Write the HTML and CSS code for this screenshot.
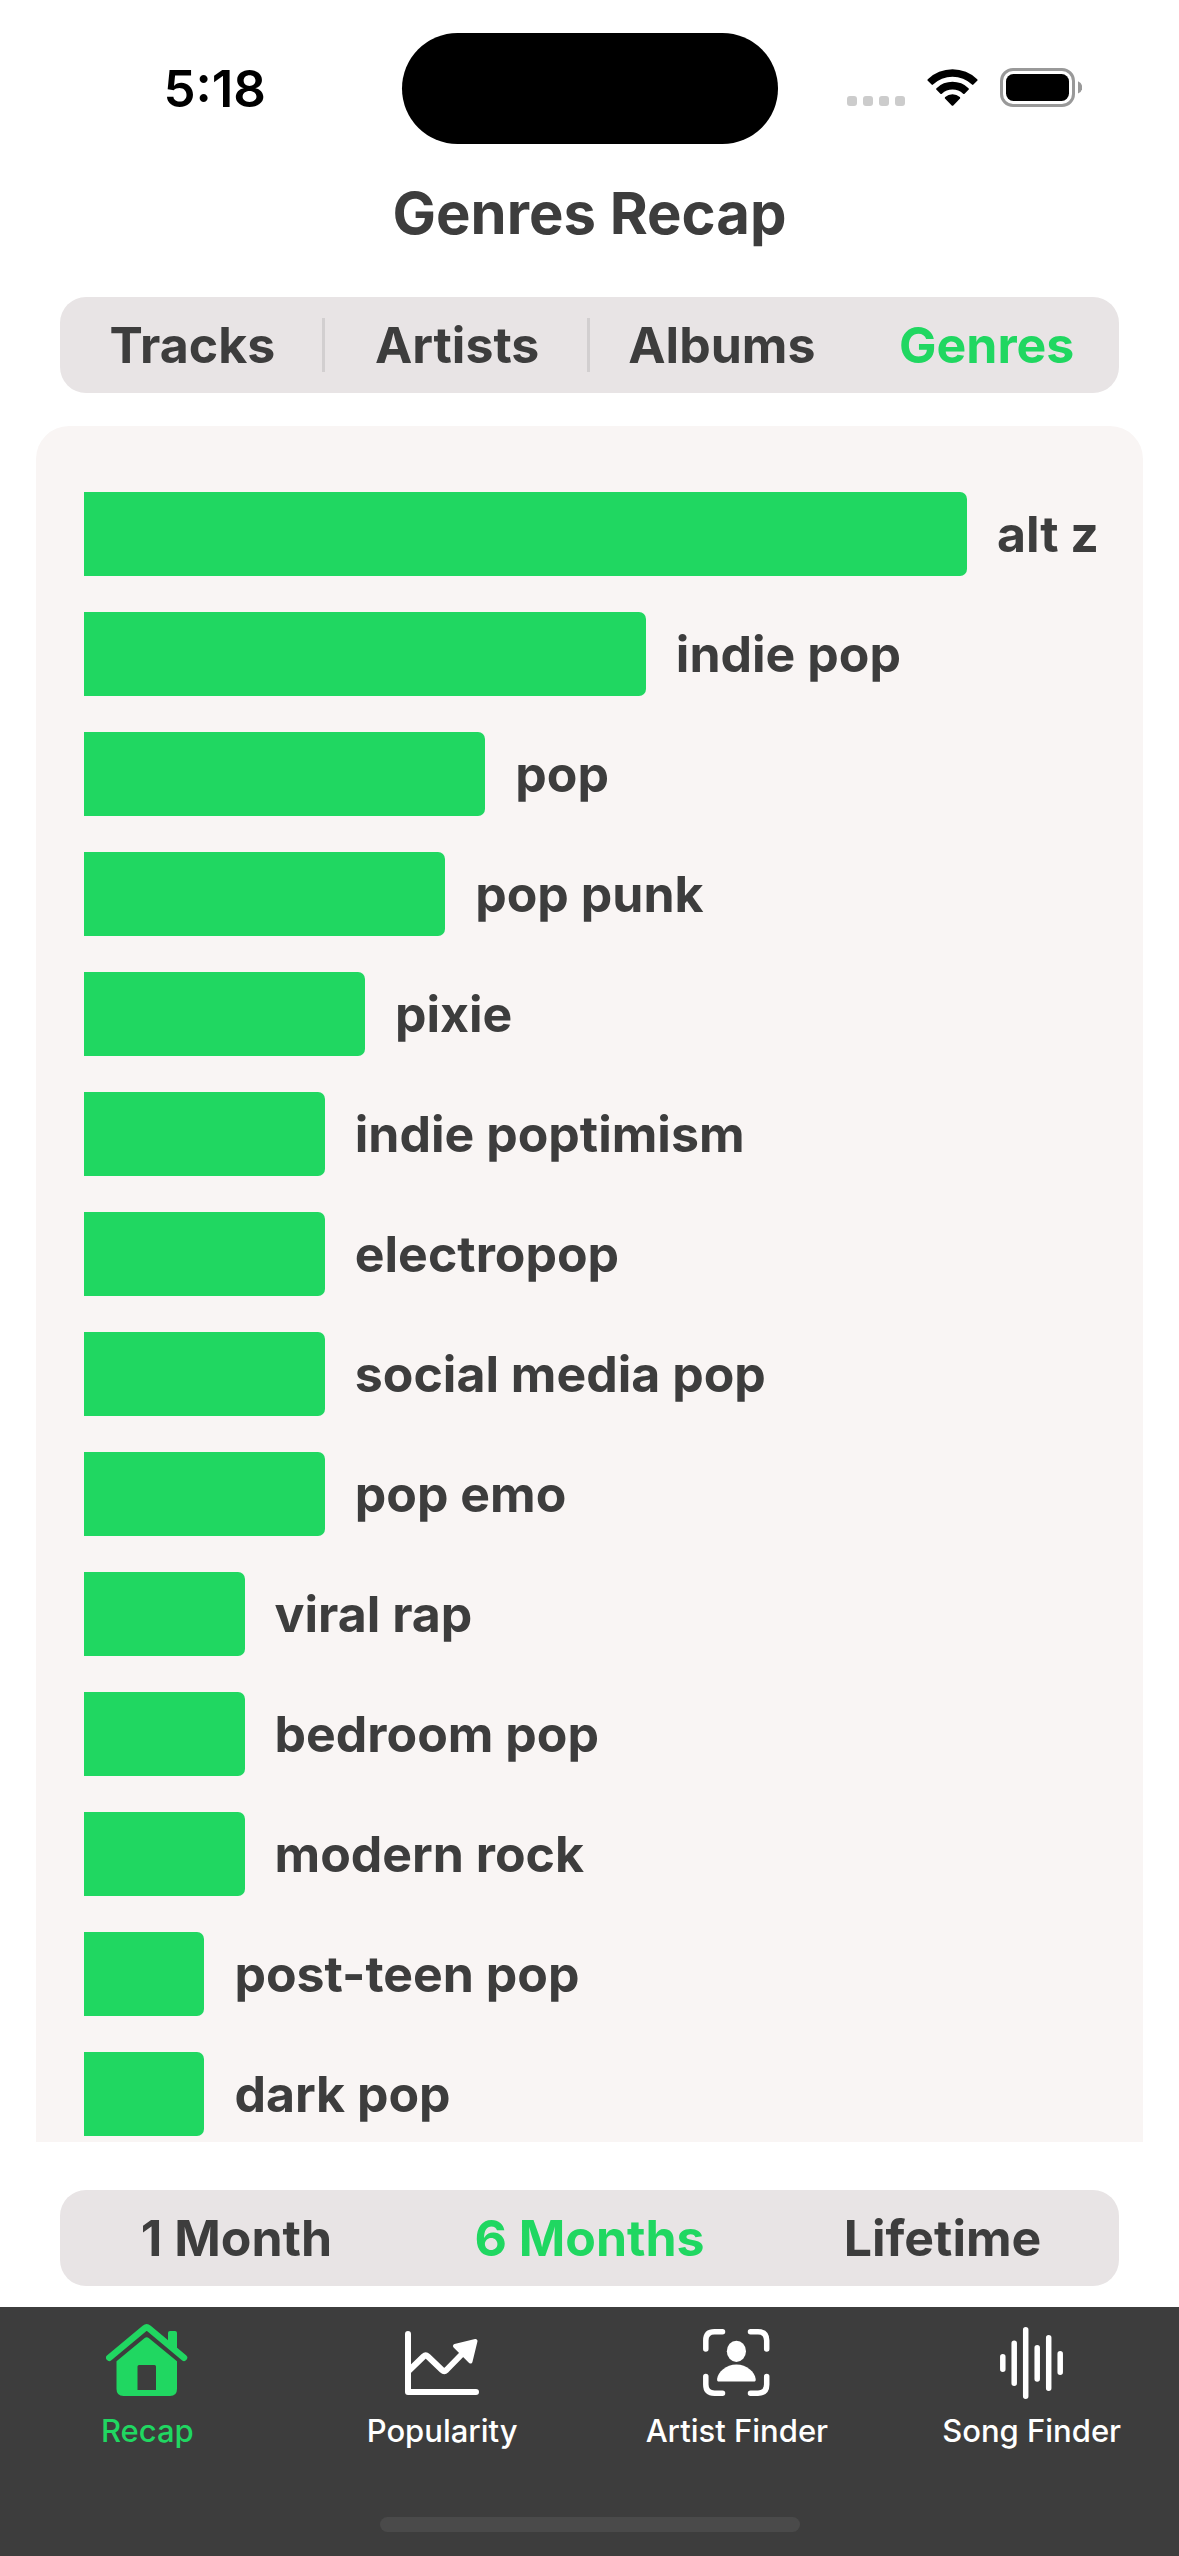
FILE: index.html
```html
<!DOCTYPE html>
<html lang="en">
<head>
<meta charset="utf-8">
<meta name="viewport" content="width=device-width, initial-scale=1">
<title>Genres Recap</title>
<link rel="stylesheet" href="styles.css">
</head>
<body>
<header class="status">
  <time class="status-time">5:18</time>
  <div class="island"></div>
  <div class="status-icons">
    <svg width="58" height="41" viewBox="0 0 58 41" fill="#ccc" aria-hidden="true">
      <rect x="0" y="28" width="10" height="10" rx="3"/><rect x="16" y="28" width="10" height="10" rx="3"/><rect x="32" y="28" width="10" height="10" rx="3"/><rect x="48" y="28" width="10" height="10" rx="3"/>
    </svg>
    <svg width="51" height="41" viewBox="0 0 51 41" aria-hidden="true">
      <path d="M0.8 11.2a35.4 35.4 0 0 1 49.4 0q.8.8 0 1.6L46.4 16.600q-.7.6-1.400 0a28.200 28.200 0 0 0-39 0q-.7.600-1.400 0L.8 12.800q-.8-.8 0-1.600zM9.500 20.200a22.800 22.800 0 0 1 32 0q.8.8 0 1.600L37.600 25.700q-.7.700-1.500 0a15.500 15.500 0 0 0-21.200 0q-.8.700-1.500 0L9.500 21.800q-.8-.8 0-1.600zM18.200 29.100a10.600 10.600 0 0 1 14.600 0q.8.8 0 1.600L26.300 37.500q-.8.700-1.600 0L18.200 30.700q-.8-.8 0-1.600z"/>
    </svg>
    <svg width="82" height="41" viewBox="0 0 82 41" aria-hidden="true">
      <rect x="1.500" y="1.500" width="72" height="36" rx="11.500" fill="none" stroke="#999" stroke-width="3"/>
      <rect x="6" y="6" width="63" height="27" rx="7.500"/>
      <path d="M78 13.200a6.600 6.600 0 0 1 0 12.300z" fill="#999"/>
    </svg>
  </div>
</header>

<main class="screen">
  <h1 class="title">Genres Recap</h1>

  <div class="segments segments-top" role="group" aria-label="Category">
    <button class="segment" type="button">Tracks</button>
    <button class="segment divided" type="button">Artists</button>
    <button class="segment divided" type="button">Albums</button>
    <button class="segment selected" type="button" aria-pressed="true">Genres</button>
  </div>

  <ul class="chart">
    <li class="row"><span class="bar" style="--count:22"></span>alt z</li>
    <li class="row"><span class="bar" style="--count:14"></span>indie pop</li>
    <li class="row"><span class="bar" style="--count:10"></span>pop</li>
    <li class="row"><span class="bar" style="--count:9"></span>pop punk</li>
    <li class="row"><span class="bar" style="--count:7"></span>pixie</li>
    <li class="row"><span class="bar" style="--count:6"></span>indie poptimism</li>
    <li class="row"><span class="bar" style="--count:6"></span>electropop</li>
    <li class="row"><span class="bar" style="--count:6"></span>social media pop</li>
    <li class="row"><span class="bar" style="--count:6"></span>pop emo</li>
    <li class="row"><span class="bar" style="--count:4"></span>viral rap</li>
    <li class="row"><span class="bar" style="--count:4"></span>bedroom pop</li>
    <li class="row"><span class="bar" style="--count:4"></span>modern rock</li>
    <li class="row"><span class="bar" style="--count:3"></span>post-teen pop</li>
    <li class="row"><span class="bar" style="--count:3"></span>dark pop</li>
  </ul>

  <div class="segments" role="group" aria-label="Time range">
    <button class="segment" type="button">1 Month</button>
    <button class="segment selected" type="button" aria-pressed="true">6 Months</button>
    <button class="segment" type="button">Lifetime</button>
  </div>
</main>

<footer class="tabbar">
  <nav class="tabs">
    <a class="tab current" href="#recap" aria-current="page">
      <svg width="82" height="76" viewBox="0 0 82 76" fill="currentColor" aria-hidden="true">
        <path d="M3.300 33.700 38.700 4.200q2-1.600 4 0L78 33.700" fill="none" stroke="currentColor" stroke-width="6.500" stroke-linecap="round" stroke-linejoin="round"/>
        <path d="M62 18V9q0-2 2-2h5q2 0 2 2v17z"/>
        <path fill-rule="evenodd" d="M38.700 14q2-1.600 4 0L71 37.300V65q0 7-7 7H17.500q-7 0-7-7V37.300zM33 41q-1.500 0-1.500 1.500V66H50V42.500Q50 41 48.500 41z"/>
      </svg>
      Recap
    </a>
    <a class="tab" href="#popularity">
      <svg width="74" height="76" viewBox="0 -7 74 76" fill="none" stroke="currentColor" stroke-width="6" stroke-linecap="round" stroke-linejoin="round" aria-hidden="true">
        <path d="M3 3v58h68"/>
        <path d="M3 40.500 18.500 25.500q2.200-2 4.400 0L37 39q2.200 2 4.400 0L60 20"/>
        <path d="M50 15 70.500 10 65.500 30.500z" fill="currentColor" stroke-width="4"/>
      </svg>
      Popularity
    </a>
    <a class="tab" href="#artist-finder">
      <svg width="67" height="76" viewBox="0 -5 67 76" fill="none" stroke="currentColor" stroke-width="5.500" stroke-linecap="round" aria-hidden="true">
        <path d="M2.800 20v-8.500q0-8.700 8.700-8.700H19.500M47.500 2.800H55q8.700 0 8.700 8.700V20M63.700 47.500V55.500q0 8.700-8.700 8.700H47.500M19.500 64.200H11.500q-8.700 0-8.700-8.700V47.500"/>
        <g fill="currentColor" stroke="none"><ellipse cx="33.400" cy="22.300" rx="9.600" ry="10.600"/><path d="M16 52.600q-2.200 0-1.900-2.600C15 43 23 35.500 33.400 35.500S51.800 43 52.700 50q.3 2.600-1.900 2.600z"/></g>
      </svg>
      Artist Finder
    </a>
    <a class="tab" href="#song-finder">
      <svg width="63" height="76" viewBox="0 -3 63 76" fill="none" stroke="currentColor" stroke-width="5.500" stroke-linecap="round" aria-hidden="true">
        <path d="M2.800 29.800v12.400M14.200 16.300v40M25.700 2.800v66.400M37.200 20.800v31.200M48.700 10.800v50.400M60.200 26.800v18.400"/>
      </svg>
      Song Finder
    </a>
  </nav>
  <div class="home-indicator"></div>
</footer>
</body>
</html>
```

FILE: styles.css
```css
:root {
  --green: #20d761;
  --ink: #3d3d3d;
  --control: #e8e4e5;
  --card: #f9f5f4;
}

* {
  box-sizing: border-box;
}

body {
  margin: 0;
  min-height: 100vh;
  display: flex;
  flex-direction: column;
  background: #fff;
  color: var(--ink);
  font-family: Inter, "Liberation Sans", sans-serif;
  font-size: 50px;
  font-weight: 650;
}

.status {
  display: grid;
  grid-template-columns: 1fr 376px 1fr;
  align-items: center;
  justify-items: center;
  padding: 33px 28px;
  color: #000;
}

.status-time {
  font-size: 51px;
  font-weight: 600;
  line-height: 60px;
}

.island {
  width: 100%;
  height: 111px;
  border-radius: 56px;
  background: #000;
}

.status-icons {
  display: flex;
  gap: 22px;
}

.screen {
  flex: 1;
}

.title {
  margin: 0 0 48px;
  font-size: 58px;
  line-height: 72px;
  font-weight: 650;
  text-align: center;
}

.segments {
  display: grid;
  grid-auto-flow: column;
  grid-auto-columns: 1fr;
  margin: 48px 60px 21px;
  padding: 21px 0;
  border-radius: 26px;
  background: var(--control);
}

.segments-top {
  margin: 0 60px 33px;
}

.segment {
  padding: 0;
  border: 0;
  background: none;
  color: inherit;
  font: inherit;
  line-height: 54px;
}

.divided {
  box-shadow: -3px 0 #d2cfd0;
}

.selected {
  color: var(--green);
}

.chart {
  display: flex;
  flex-direction: column;
  gap: 36px;
  margin: 0 36px;
  padding: 66px 36px 6px 48px;
  border-radius: 33px 33px 0 0;
  background: var(--card);
  list-style: none;
}

.row {
  display: flex;
  align-items: center;
  gap: 30px;
  line-height: 84px;
  white-space: nowrap;
}

.bar {
  flex: none;
  width: calc(var(--count) * 3.923%);
  height: 84px;
  border-radius: 0 7px 7px 0;
  background: var(--green);
}

.tabbar {
  padding: 17px 0 24px;
  background: var(--ink);
}

.tabs {
  display: grid;
  grid-template-columns: repeat(4, 1fr);
}

.tab {
  display: flex;
  flex-direction: column;
  align-items: center;
  gap: 13px;
  color: #fff;
  font-size: 31px;
  font-weight: 500;
  line-height: 36px;
  text-decoration: none;
}

.current {
  color: var(--green);
}

.home-indicator {
  width: 420px;
  height: 15px;
  margin: 68px auto 0;
  border-radius: 8px;
  background: #4a4a4a;
}
```
